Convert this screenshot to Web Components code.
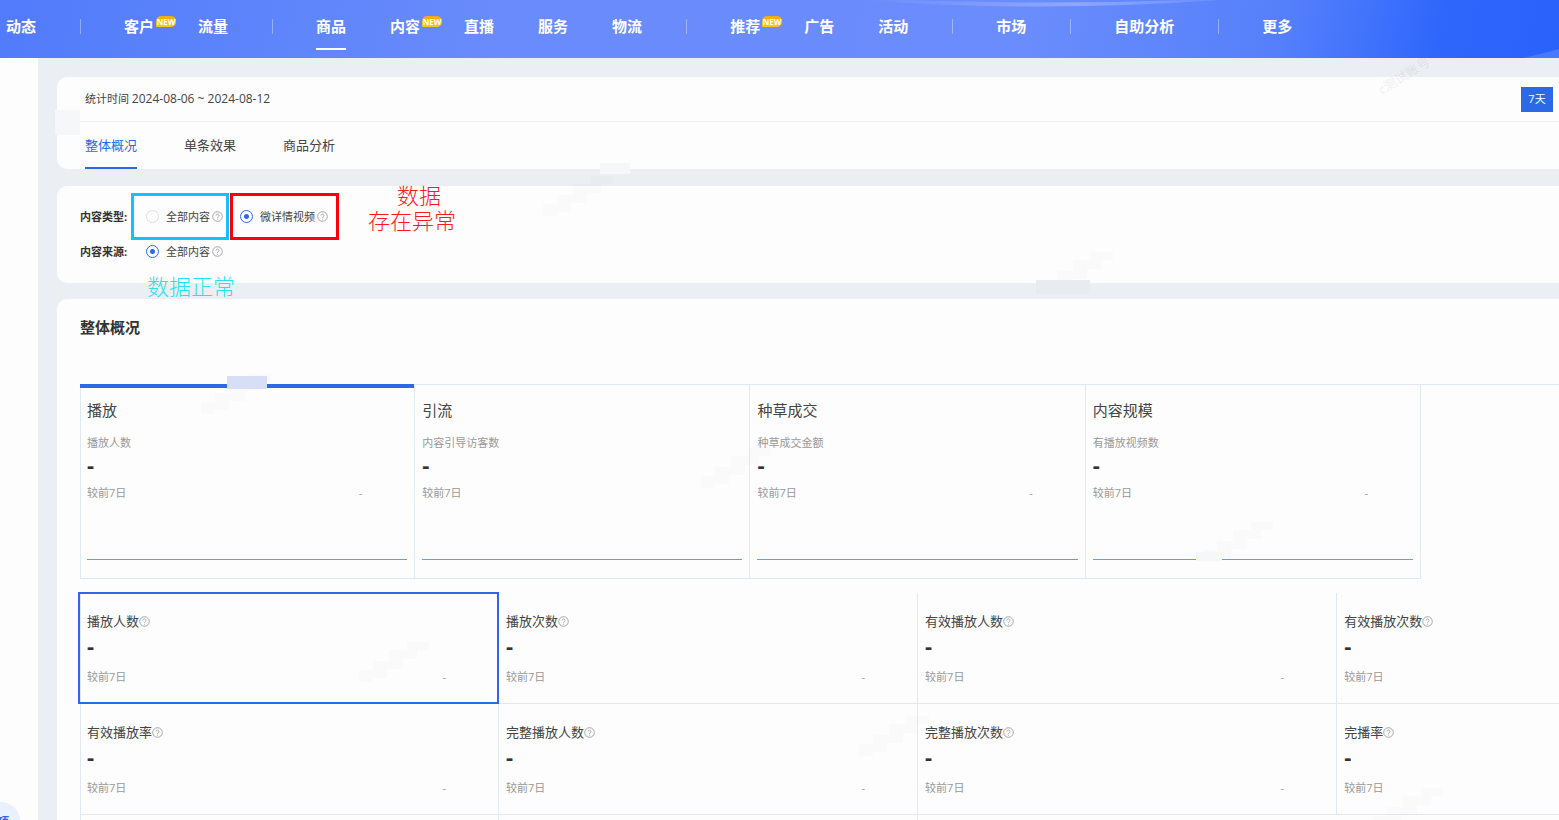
<!DOCTYPE html>
<html lang="zh-CN">
<head>
<meta charset="utf-8">
<meta name="viewport" content="width=device-width, initial-scale=1">
<title>商品 - 整体概况</title>
<style>
  html, body { margin: 0; height: 100%; }
  body {
    overflow: hidden;
    background: #ebeef3;
    color: #444;
    font-family: "Open Sans", "Noto Sans CJK SC", sans-serif;
    font-size: 11px;
    line-height: 16px;
    --blue: #2b69e6;
    --line: #e2e8f0;
    --card: #fdfdfd;
    --muted: #999;
  }
</style>
</head>
<body>
<dashboard-app></dashboard-app>

<script>
const define = (name, html, setup) => {
  const template = document.createElement('template');
  template.innerHTML = html;
  customElements.define(name, class extends HTMLElement {
    constructor() {
      super();
      this.attachShadow({ mode: 'open' }).append(template.content.cloneNode(true));
    }
    connectedCallback() {
      if (setup) setup(this, this.shadowRoot);
    }
  });
};

/* Question mark in a circle, shown after labels */
define('help-icon', `
  <style>
    :host { display: block; flex: none; width: 11px; height: 11px; color: #999; }
    svg { display: block; width: 100%; height: 100%; }
  </style>
  <svg viewBox="0 0 22 22" fill="none" stroke="currentColor" stroke-width="1.7" aria-hidden="true">
    <circle cx="11" cy="11" r="9.6"/>
    <path d="M8 9a3 3 0 1 1 4.6 2.5c-1.1.7-1.6 1.200-1.600 2.300"/>
    <path d="M11 15.400v1.800"/>
  </svg>`);

define('nav-item', `
  <style>
    :host { display: block; flex: none; }
    a { position: relative; display: block; height: 50px; line-height: 52px; box-sizing: border-box;
        color: #fff; font-size: 15px; font-weight: 700; text-decoration: none; white-space: nowrap; }
    :host([active]) a { border-bottom: 2px solid #fff; }
    .badge { display: none; position: absolute; left: 100%; top: 16px; width: 20px; height: 11px; margin-left: 2px;
        border-radius: 5px 5px 5px 1px; background: linear-gradient(#f3a913, #fccb10);
        font-size: 8px; line-height: 11px; text-align: center; }
    :host([new]) .badge { display: block; }
  </style>
  <a href="#"><slot></slot><span class="badge">NEW</span></a>`,
  (host, root) => { if (!host.hasAttribute('new')) root.querySelector('.badge')?.remove(); });

define('top-nav', `
  <style>
    :host { display: block; position: relative; overflow: hidden; height: 58px; flex: none;
      background: linear-gradient(100deg, #527bfb 0%, #5b83fb 14%, #698bfb 32%, #6a8cfc 66%, #5580fb 82%, #2f67fc 92%, #2961fb 100%); }
    .glow { position: absolute; right: 0; top: 0; width: 700px; height: 58px; }
    nav { position: relative; display: flex; gap: 44px; padding-left: 6px; }
    i { flex: none; width: 1px; height: 15px; margin: 19px -1px 0 0; background: rgba(255,255,255,.35); }
  </style>
  <svg class="glow" viewBox="0 0 700 58" aria-hidden="true">
    <defs>
      <linearGradient id="g"><stop offset="0" stop-color="#fff" stop-opacity="0"/><stop offset=".6" stop-color="#fff" stop-opacity=".25"/><stop offset="1" stop-color="#fff" stop-opacity=".1"/></linearGradient>
    </defs>
    <path d="M0 0Q180 13 360 0L330 0Q180 5 50 0Z" fill="url(#g)"/>
    <path d="M664 58Q682 54 700 49V58Z" fill="#fff" opacity=".15"/>
  </svg>
  <nav aria-label="主导航">
    <nav-item>动态</nav-item><i></i>
    <nav-item new>客户</nav-item><nav-item>流量</nav-item><i></i>
    <nav-item active>商品</nav-item><nav-item new>内容</nav-item><nav-item>直播</nav-item><nav-item>服务</nav-item><nav-item>物流</nav-item><i></i>
    <nav-item new>推荐</nav-item><nav-item>广告</nav-item><nav-item>活动</nav-item><i></i>
    <nav-item>市场</nav-item><i></i>
    <nav-item>自助分析</nav-item><i></i>
    <nav-item>更多</nav-item>
  </nav>`);

define('side-rail', `
  <style>
    :host { display: block; position: relative; overflow: hidden; flex: none; width: 38px; background: #fdfdfd; }
    button { position: absolute; left: -18px; bottom: -20px; width: 38px; height: 38px; padding: 0 11px 0 0;
      border: 0; border-radius: 50%; background: #e9f0fe; color: #3a62f0;
      font: 700 11px/14px "Noto Sans CJK SC", sans-serif; text-align: right; }
  </style>
  <button type="button">项</button>`);

define('panel-card', `
  <style>
    :host { display: block; border-radius: 10px 0 0 10px; background: var(--card); }
  </style>
  <slot></slot>`);

define('period-header', `
  <style>
    :host { display: block; }
    .time { display: flex; align-items: center; justify-content: space-between; height: 44px;
      margin-left: 23px; padding: 0 6px 0 5px; border-bottom: 1px solid #eee; }
    time { font-size: 12px; }
    .range { white-space: pre; }
    button { font: inherit; border: 0; cursor: pointer; }
    .days { width: 32px; height: 25px; padding: 0; background: var(--blue); color: #fff; }
    .tabs { display: flex; gap: 47px; padding-left: 28px; }
    .tabs button { height: 47px; padding: 0; border-bottom: 2px solid transparent; background: none;
      color: #444; font-size: 13px; }
    .tabs button[aria-selected=true] { color: var(--blue); border-color: var(--blue); }
  </style>
  <div class="time">
    <span class="range">统计时间 <time>2024-08-06 ~ 2024-08-12</time></span>
    <button class="days" type="button">7天</button>
  </div>
  <div class="tabs" role="tablist">
    <button type="button" role="tab" aria-selected="true">整体概况</button>
    <button type="button" role="tab" aria-selected="false">单条效果</button>
    <button type="button" role="tab" aria-selected="false">商品分析</button>
  </div>`);

define('filter-panel', `
  <style>
    :host { display: block; position: relative; padding: 13px 0 14px 23px; }
    .row { display: flex; align-items: center; gap: 17px; height: 35px; }
    .name { width: 49px; color: #333; font-weight: 700; }
    .option { position: relative; display: flex; align-items: center; }
    label { display: flex; align-items: center; gap: 7px; margin-right: 2px; }
    input { appearance: none; width: 13px; height: 13px; margin: 0; border: 1px solid #ddd; border-radius: 50%; background: #fff; }
    input:checked { border-color: var(--blue); background: radial-gradient(circle, var(--blue) 0 2px, #fff 3px); }
    .frame { position: absolute; top: -16px; bottom: -15px; border: 3px solid; pointer-events: none; }
    .cyan { left: -15px; right: -6px; color: #15c0fc; }
    .red { left: -10px; right: -11px; color: #fc0006; }
    .note { position: absolute; margin: 0; font: 300 22px/25px "Noto Sans CJK SC", sans-serif; white-space: nowrap; }
    .note span { display: block; }
    .note .first { padding-left: 29px; }
    .warn { left: 311px; top: -4px; color: #fc1a1e; }
    .ok { left: 90px; top: 87px; color: #23e4ee; z-index: 1; }
  </style>
  <div class="row" role="radiogroup" aria-labelledby="type">
    <span class="name" id="type">内容类型:</span>
    <div class="option"><label><input type="radio" name="type">全部内容</label><help-icon></help-icon><span class="frame cyan"></span></div>
    <div class="option"><label><input type="radio" name="type" checked>微详情视频</label><help-icon></help-icon><span class="frame red"></span></div>
  </div>
  <div class="row" role="radiogroup" aria-labelledby="source">
    <span class="name" id="source">内容来源:</span>
    <div class="option"><label><input type="radio" name="source" checked>全部内容</label><help-icon></help-icon></div>
  </div>
  <p class="note warn"><span class="first">数据</span><span>存在异常</span></p>
  <p class="note ok">数据正常</p>`);

/* One of the large summary cards; "change" is the comparison value */
define('summary-card', `
  <style>
    :host { display: block; box-sizing: border-box; height: 195px; padding: 16px 7px 0;
      border-right: 1px solid var(--line); border-bottom: 1px solid var(--line); }
    :host([active]) { box-shadow: inset 0 4px var(--blue); }
    h3 { margin: 0; color: #444; font-size: 15px; line-height: 20px; font-weight: 400; }
    .label { margin-top: 15px; color: var(--muted); }
    .value { margin-top: 3px; color: #333; font-size: 22px; line-height: 20px; font-weight: 700; }
    .compare { display: flex; justify-content: space-between; margin-top: 11px; padding-right: 45px; color: var(--muted); }
    .trend { height: 1px; margin-top: 58px; background: #7096ea; }
  </style>
  <h3><slot></slot></h3>
  <div class="label"></div>
  <div class="value">-</div>
  <div class="compare"><span>较前7日</span><span class="change"></span></div>
  <div class="trend"></div>`,
  (host, root) => {
    root.querySelector('.label').textContent = host.getAttribute('label');
    root.querySelector('.change').textContent = host.getAttribute('change');
  });

define('metric-cell', `
  <style>
    :host { display: block; position: relative; box-sizing: border-box; height: 111px; padding: 18px 7px 0;
      border-right: 1px solid var(--line); border-bottom: 1px solid var(--line); }
    :host([active])::after { content: ""; position: absolute; inset: -1px -1px -1px -2px; border: 2px solid var(--blue); }
    h4 { display: flex; align-items: center; margin: 0; color: #444; font-size: 13px; line-height: 20px; font-weight: 400; }
    .value { margin-top: 4px; color: #333; font-size: 22px; line-height: 20px; font-weight: 700; }
    .compare { display: flex; justify-content: space-between; margin-top: 14px; padding-right: 45px; color: var(--muted); }
  </style>
  <h4><slot></slot><help-icon></help-icon></h4>
  <div class="value">-</div>
  <div class="compare"><span>较前7日</span><span>-</span></div>`);

define('overview-panel', `
  <style>
    :host { display: block; padding: 17px 0 0 23px; }
    h2 { margin: 0; color: #333; font-size: 15px; line-height: 22px; font-weight: 700; }
    .summary { display: grid; grid-template-columns: repeat(4, 17fr) 7fr; margin-top: 46px;
      background: linear-gradient(var(--line), var(--line)) top / 100% 1px no-repeat,
                  linear-gradient(var(--line), var(--line)) left / 1px 100% no-repeat; }
    .metrics { display: grid; grid-template-columns: repeat(3, 17fr) 9fr; margin-top: 14px;
      background: linear-gradient(var(--line), var(--line)) left / 1px 100% no-repeat; }
    .more { height: 40px; border-right: 1px solid var(--line); }
    .more:last-child { border: 0; }
  </style>
  <h2>整体概况</h2>
  <div class="summary">
    <summary-card active label="播放人数" change="-">播放</summary-card>
    <summary-card label="内容引导访客数" change="">引流</summary-card>
    <summary-card label="种草成交金额" change="-">种草成交</summary-card>
    <summary-card label="有播放视频数" change="-">内容规模</summary-card>
  </div>
  <div class="metrics">
    <metric-cell active>播放人数</metric-cell>
    <metric-cell>播放次数</metric-cell>
    <metric-cell>有效播放人数</metric-cell>
    <metric-cell class="edge">有效播放次数</metric-cell>
    <metric-cell>有效播放率</metric-cell>
    <metric-cell>完整播放人数</metric-cell>
    <metric-cell>完整播放次数</metric-cell>
    <metric-cell class="edge">完播率</metric-cell>
    <div class="more"></div><div class="more"></div><div class="more"></div>
  </div>`,
  (host, root) => {
    root.querySelectorAll('.edge').forEach(cell => {
      cell.style.borderRight = '0';
      cell.shadowRoot.querySelector('.compare span:last-child')?.remove();
    });
  });

/* Faint slanted account marks and the blocks that cover parts of them */
define('water-marks', `
  <style>
    :host { position: absolute; inset: 0; overflow: hidden; pointer-events: none; z-index: 2; }
    svg { display: block; width: 1559px; height: 820px; }
  </style>
  <svg viewBox="0 0 1559 820" aria-hidden="true">
    <g fill="#888" fill-opacity=".025">
      <path id="m" d="M543 216v-12h14v-9h16v-11h18v-8h22v8h-12v9h-14v10h-16v9h-14v4z"/>
      <use href="#m" x="500" y="76"/><use href="#m" x="-342" y="198"/><use href="#m" x="158" y="272" />
      <use href="#m" x="660" y="346"/><use href="#m" x="-184" y="466"/><use href="#m" x="316" y="540"/><use href="#m" x="830" y="612"/>
    </g>
    <g fill="#f6f7f8">
      <path d="M55 110h25v25H55zM600 163h30v11h-30zM1196 552h26v9h-26z"/>
      <path d="M1036 280h54v14h-54z" fill="#e8ebef"/>
    </g>
    <path d="M227 376h40v13h-40z" fill="#d6dff6"/>
    <text transform="translate(1382 95) rotate(-32)" font-size="13" fill="#777" fill-opacity=".13">c测试账号</text>
  </svg>`);

define('dashboard-app', `
  <style>
    :host { position: relative; display: flex; flex-direction: column; height: 100vh; overflow: hidden; }
    .body { display: flex; flex: 1; min-height: 0; }
    main { flex: 1; min-width: 0; padding: 19px 0 0 19px; overflow: hidden; }
    .header { margin-bottom: 17px; }
    .filters { margin-bottom: 16px; }
    .overview { min-height: 100vh; }
  </style>
  <top-nav></top-nav>
  <div class="body">
    <side-rail></side-rail>
    <main>
      <panel-card class="header"><period-header></period-header></panel-card>
      <panel-card class="filters"><filter-panel></filter-panel></panel-card>
      <panel-card class="overview"><overview-panel></overview-panel></panel-card>
    </main>
  </div>
  <water-marks></water-marks>`);
</script>
</body>
</html>
